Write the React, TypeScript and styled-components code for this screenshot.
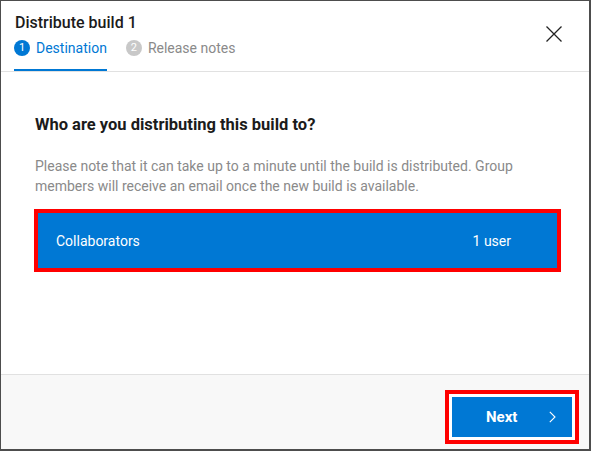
import React from 'react';
import styled, { createGlobalStyle } from 'styled-components';

const FONT = `'Segoe UI', Roboto, 'Noto Sans', sans-serif`;
const BLUE = '#0078d4';

const GlobalStyle = createGlobalStyle`
  html, body {
    margin: 0;
    padding: 0;
    background: #fff;
  }
  * {
    box-sizing: border-box;
  }
`;

const Dialog = styled.div`
  width: 591px;
  height: 451px;
  display: flex;
  flex-direction: column;
  background: #fff;
  border-style: solid;
  border-color: #4d4d4d;
  border-width: 1px 2px 2px 1px;
  font-family: ${FONT};
`;

const Header = styled.header`
  height: 71px;
  flex-shrink: 0;
  display: flex;
  align-items: flex-start;
  justify-content: space-between;
  padding: 0 26px 0 13px;
  border-bottom: 1px solid #e1e1e1;
`;

const TitleBlock = styled.div`
  display: flex;
  flex-direction: column;
  height: 100%;
`;

const Title = styled.h1`
  margin: 11px 0 0 1px;
  font-size: 16px;
  line-height: 22px;
  font-weight: 500;
  color: #1b1b1b;
`;

const Tabs = styled.div`
  display: flex;
  gap: 19px;
  margin-top: auto;
`;

const Tab = styled.div<{ $active?: boolean }>`
  display: flex;
  align-items: center;
  gap: 6px;
  height: 31px;
  padding: 0 0 14px 0;
  border-bottom: 2px solid ${(p) => (p.$active ? BLUE : 'transparent')};
  color: ${(p) => (p.$active ? BLUE : '#8a8a8a')};
  font-size: 14px;
`;

const StepDot = styled.span<{ $active?: boolean }>`
  width: 16px;
  height: 16px;
  border-radius: 50%;
  display: inline-flex;
  align-items: center;
  justify-content: center;
  background: ${(p) => (p.$active ? BLUE : '#c8c8c8')};
  color: #fff;
  font-size: 11px;
  line-height: 1;
`;

const CloseButton = styled.button`
  margin-top: 24px;
  width: 18px;
  height: 18px;
  padding: 0;
  border: none;
  background: transparent;
  display: flex;
  align-items: center;
  justify-content: center;
  cursor: pointer;
`;

const Body = styled.main`
  flex: 1;
  padding: 42px 30px 0 33px;
`;

const Heading = styled.h2`
  margin: 0 0 0 1px;
  font-size: 16.5px;
  line-height: 22px;
  font-weight: 700;
  color: #1b1b1b;
`;

const Note = styled.p`
  margin: 20px 0 0 1px;
  font-size: 14px;
  line-height: 20px;
  color: #8a8a8a;
`;

const Group = styled.div`
  margin-top: 13px;
  width: 527px;
  height: 63px;
  border: 4px solid #ff0000;
  background: ${BLUE};
  color: #fff;
  display: flex;
  align-items: center;
  justify-content: space-between;
  padding: 0 46px 0 18px;
  font-size: 14px;
`;

const Footer = styled.footer`
  height: 75px;
  flex-shrink: 0;
  background: #f8f8f8;
  border-top: 1px solid #e1e1e1;
  display: flex;
  justify-content: flex-end;
  align-items: flex-start;
  padding: 22px 17px 0 0;
`;

const NextButton = styled.button`
  width: 120px;
  height: 40px;
  border: none;
  background: ${BLUE};
  color: #fff;
  font-family: ${FONT};
  font-size: 15px;
  font-weight: 700;
  display: flex;
  align-items: center;
  justify-content: space-between;
  padding: 0 16px 0 34px;
  box-shadow: 0 0 0 3px #fff, 0 0 0 7px #ff0000;
  cursor: pointer;
`;

const App: React.FC = () => {
  return (
    <>
      <GlobalStyle />
      <Dialog>
        <Header>
          <TitleBlock>
            <Title>Distribute build 1</Title>
            <Tabs>
              <Tab $active>
                <StepDot $active>1</StepDot>
                Destination
              </Tab>
              <Tab>
                <StepDot>2</StepDot>
                Release notes
              </Tab>
            </Tabs>
          </TitleBlock>
          <CloseButton aria-label="Close">
            <svg width="16" height="16" viewBox="0 0 16 16">
              <path d="M0.5 0.5 L15.5 15.5 M15.5 0.5 L0.5 15.5" stroke="#222" strokeWidth="1.3" fill="none" />
            </svg>
          </CloseButton>
        </Header>
        <Body>
          <Heading>Who are you distributing this build to?</Heading>
          <Note>
            Please note that it can take up to a minute until the build is distributed. Group
            members will receive an email once the new build is available.
          </Note>
          <Group>
            <span>Collaborators</span>
            <span>1 user</span>
          </Group>
        </Body>
        <Footer>
          <NextButton>
            Next
            <svg width="7" height="12" viewBox="0 0 7 12">
              <path d="M0.8 0.8 L6 6 L0.8 11.2" stroke="#fff" strokeWidth="1.1" fill="none" />
            </svg>
          </NextButton>
        </Footer>
      </Dialog>
    </>
  );
};

export default App;
